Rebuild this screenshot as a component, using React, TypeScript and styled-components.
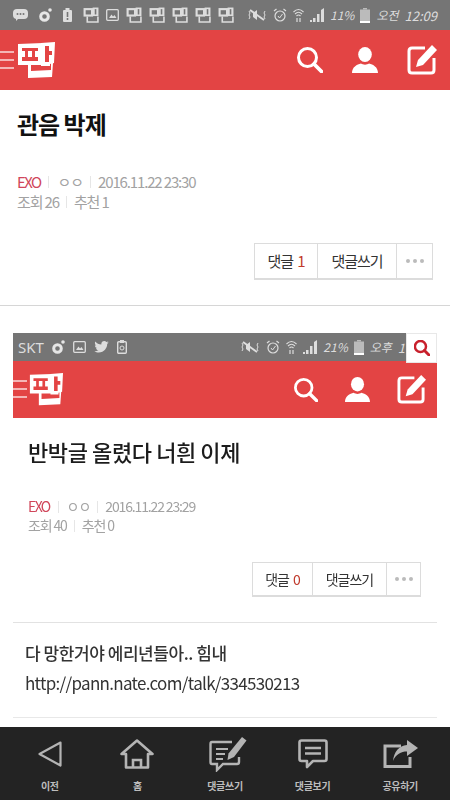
import React from "react";
import styled, { createGlobalStyle } from "styled-components";

const GlobalStyle = createGlobalStyle`
  html, body {
    margin: 0;
    padding: 0;
    background: #fff;
  }
  * {
    box-sizing: border-box;
  }
`;

const FONT = `"Noto Sans CJK KR", "Noto Sans", sans-serif`;

const Page = styled.div`
  display: flex;
  flex-direction: column;
  width: 450px;
  height: 800px;
  overflow: hidden;
  background: #fff;
  font-family: ${FONT};
`;

const StatusBar = styled.div<{ $inner?: boolean }>`
  position: relative;
  display: flex;
  align-items: center;
  justify-content: space-between;
  flex: none;
  height: ${(p) => (p.$inner ? "28px" : "30px")};
  padding: ${(p) => (p.$inner ? "0 32px 0 5px" : "0 13px")};
  background: #757575;
  color: #ddd;
`;

const StatusGroup = styled.div<{ $gap?: number }>`
  display: flex;
  align-items: center;
  gap: ${(p) => p.$gap ?? 8}px;
`;

const StatusText = styled.span<{ $size?: number }>`
  font-size: ${(p) => p.$size ?? 12}px;
  line-height: 1;
  font-style: italic;
  color: #ddd;
  white-space: nowrap;
`;

const CarrierText = styled.span`
  font-family: "Noto Sans", sans-serif;
  font-size: 15px;
  line-height: 1;
  color: #ddd;
`;

const SearchBadge = styled.div`
  position: absolute;
  top: 0;
  right: 0;
  display: flex;
  align-items: center;
  justify-content: center;
  width: 31px;
  height: 30px;
  background: #fff;
  border: 1px solid #e8e8e8;
  z-index: 1;
`;

const Header = styled.header<{ $inner?: boolean }>`
  display: flex;
  align-items: center;
  flex: none;
  height: ${(p) => (p.$inner ? "57px" : "60px")};
  padding-right: ${(p) => (p.$inner ? "11px" : "13px")};
  background: #e34444;
`;

const Burger = styled.div`
  display: flex;
  flex-direction: column;
  gap: 6px;
  width: 14px;
  margin-top: -1px;

  span {
    display: block;
    height: 2px;
    background: #f4b5b5;
  }
`;

const LogoSlot = styled.div<{ $inner?: boolean }>`
  display: flex;
  margin-left: ${(p) => (p.$inner ? "2px" : "3px")};
  margin-right: auto;
`;

const HeaderIcons = styled.div<{ $inner?: boolean }>`
  display: flex;
  align-items: center;
  gap: ${(p) => (p.$inner ? "27px" : "29px")};
`;

const Content = styled.main`
  flex: 1;
  min-height: 0;
  overflow: hidden;
`;

const Post = styled.section`
  display: flex;
  flex-direction: column;
  padding: 17px 17px 25px;
  border-bottom: 1px solid #d6d6d6;
`;

const Title = styled.h1`
  margin: 0;
  font-size: 24px;
  line-height: 34px;
  font-weight: 700;
  letter-spacing: -1px;
  color: #111;
`;

const MetaBlock = styled.div<{ $top: number; $line: number; $size: number }>`
  margin-top: ${(p) => p.$top}px;
  font-size: ${(p) => p.$size}px;
  line-height: ${(p) => p.$line}px;
  letter-spacing: -1.15px;
  color: #a2a2a2;
`;

const MetaRow = styled.div`
  display: flex;
  align-items: center;
  white-space: nowrap;
`;

const Board = styled.span`
  letter-spacing: -1.6px;
  color: #d0465a;
`;

const Anon = styled.span`
  letter-spacing: -1px;
`;

const MetaSep = styled.i<{ $gap: number }>`
  display: block;
  width: 1px;
  height: 12px;
  margin: 0 ${(p) => p.$gap}px;
  background: #e6e6e6;
`;

const Actions = styled.div<{ $top: number; $height: number; $inset?: number }>`
  display: flex;
  align-self: flex-end;
  height: ${(p) => p.$height}px;
  margin-top: ${(p) => p.$top}px;
  margin-right: ${(p) => p.$inset ?? 0}px;
  border: 1px solid #dcdcdc;
  border-bottom-width: 2px;
  background: #fff;
`;

const ActionCell = styled.div<{ $width: number; $size: number }>`
  display: flex;
  align-items: center;
  justify-content: center;
  gap: 4px;
  width: ${(p) => p.$width}px;
  padding-bottom: 1px;
  font-size: ${(p) => p.$size}px;
  letter-spacing: -1px;
  color: #333;
  border-left: 1px solid #dcdcdc;

  &:first-child {
    border-left: none;
  }
`;

const Count = styled.span`
  color: #c0392b;
`;

const Dots = styled.div`
  display: flex;
  gap: 3px;

  span {
    width: 4px;
    height: 4px;
    border-radius: 50%;
    background: #bbb;
  }
`;

const Shot = styled.div`
  margin: 27px 13px 0;
  filter: blur(0.4px);
`;

const ShotBody = styled.div`
  display: flex;
  flex-direction: column;
  padding: 17px 0 25px 15px;
  border-bottom: 1px solid #e2e2e2;
`;

const ShotTitle = styled.h2`
  margin: 0;
  font-size: 22px;
  line-height: 32px;
  font-weight: 500;
  letter-spacing: -0.4px;
  color: #1c1c1c;
`;

const Body = styled.div`
  padding: 15px 12px 19px;
  border-bottom: 1px solid #e8e8e8;
  font-size: 17px;
  line-height: 30px;
  color: #333;
`;

const BodyLine = styled.div`
  letter-spacing: -0.7px;
  white-space: nowrap;
`;

const BodyLead = styled.div`
  font-weight: 500;
  letter-spacing: -0.45px;
  white-space: nowrap;
`;

const BottomNav = styled.nav`
  display: grid;
  grid-template-columns: repeat(5, 1fr);
  flex: none;
  height: 73px;
  padding: 0 6px;
  background: #232323;
`;

const NavItem = styled.div`
  display: flex;
  flex-direction: column;
  align-items: center;
`;

const NavIcon = styled.div`
  display: flex;
  align-items: center;
  justify-content: center;
  height: 44px;
  margin-top: 5px;
`;

const NavLabel = styled.span`
  margin-top: 3px;
  font-size: 10px;
  line-height: 14px;
  font-weight: 700;
  letter-spacing: -0.3px;
  color: #bdbdbd;
  white-space: nowrap;
`;

/* red header logo, white blocks with the red strokes cut over them */
const Logo = ({ width = 38 }: { width?: number }) => (
  <svg width={width} height={(width * 36) / 38} viewBox="0 0 38 36">
    <path d="M1 2 L26 1 L26 23 L1 23 Z" fill="#fff" />
    <path d="M24 1 L38 0 L37 21 L33 22 L33 24 L24 24 Z" fill="#fff" />
    <path d="M11 20 L14 20 L14 29 L34 28 L34 21 L36 21 L35 35 L11 36 Z" fill="#fff" />
    <path d="M5 6 H21 V9 H18 V15 H21 V19 H5 V15 H8 V9 H5 Z M11 9 V15 H15 V9 Z" fill="#e34444" fillRule="evenodd" />
    <path d="M28 4 H32 V9 H35 V13 H32 V20 H28 Z" fill="#e34444" />
  </svg>
);

const MiniLogo = () => (
  <svg width="16" height="16" viewBox="0 0 15 15">
    <rect x="0.5" y="1" width="9" height="8" fill="#ddd" />
    <rect x="9" y="0.5" width="5.5" height="8" fill="#ddd" />
    <path d="M4 9 V14 H14 V9" fill="none" stroke="#ddd" strokeWidth="1.5" />
    <rect x="2.5" y="3" width="5" height="4" fill="#757575" />
    <rect x="11" y="2" width="1.5" height="5" fill="#757575" />
  </svg>
);

const ChatIcon = () => (
  <svg width="15" height="12" viewBox="0 0 15 12">
    <rect x="0" y="0" width="15" height="10" rx="4" fill="#ddd" />
    <path d="M3 9 L3 12 L6 9 Z" fill="#ddd" />
    <circle cx="4.5" cy="5" r="1" fill="#757575" />
    <circle cx="7.5" cy="5" r="1" fill="#757575" />
    <circle cx="10.5" cy="5" r="1" fill="#757575" />
  </svg>
);

const RingIcon = () => (
  <svg width="13" height="14" viewBox="0 0 13 14">
    <circle cx="5.5" cy="8.5" r="3.8" fill="none" stroke="#e6e6e6" strokeWidth="3" />
    <circle cx="11" cy="2" r="1.8" fill="#e6e6e6" />
  </svg>
);

const NoticeIcon = () => (
  <svg width="9" height="14" viewBox="0 0 9 14">
    <rect x="2.5" y="0" width="4" height="2" fill="#ddd" />
    <rect x="0" y="2" width="9" height="12" rx="1" fill="#ddd" />
    <rect x="3.7" y="4" width="1.6" height="5" fill="#757575" />
    <rect x="3.7" y="10" width="1.6" height="2" fill="#757575" />
  </svg>
);

const ImageIcon = () => (
  <svg width="13" height="12" viewBox="0 0 13 12">
    <rect x="0.7" y="0.7" width="11.6" height="10.6" rx="1" fill="none" stroke="#ddd" strokeWidth="1.3" />
    <path d="M3 9 L5.5 5.5 L7 7.5 L8.5 6 L10.5 9 Z" fill="#ddd" />
  </svg>
);

const TwitterIcon = () => (
  <svg width="15" height="12" viewBox="0 0 24 20">
    <path
      d="M24 2.4c-.9.4-1.8.7-2.8.8 1-.6 1.8-1.6 2.2-2.7-1 .6-2 1-3.1 1.2C19.3.7 18 0 16.6 0c-2.7 0-4.900 2.200-4.900 4.900 0 .4 0 .8.100 1.100C7.700 5.800 4.100 3.900 1.700.900c-.4.700-.7 1.600-.7 2.500 0 1.700.9 3.200 2.200 4.100-.8 0-1.600-.2-2.200-.6v.1c0 2.400 1.700 4.400 3.900 4.800-.4.100-.8.200-1.300.2-.3 0-.6 0-.9-.1.6 2 2.400 3.400 4.600 3.400C5 16.100 2.800 17 .6 17c-.2 0-.4 0-.6 0C2.200 18.300 4.800 19.200 7.500 19.200c9 0 14-7.500 14-14v-.6c1-.7 1.800-1.500 2.500-2.200z"
      fill="#ddd"
    />
  </svg>
);

const ClipIcon = () => (
  <svg width="10" height="14" viewBox="0 0 10 14">
    <rect x="0.7" y="1.7" width="8.6" height="11.6" rx="1" fill="none" stroke="#ddd" strokeWidth="1.4" />
    <rect x="3" y="0" width="4" height="3" fill="#ddd" />
    <circle cx="5" cy="8" r="2" fill="none" stroke="#ddd" />
  </svg>
);

const MuteIcon = () => (
  <svg width="20" height="14" viewBox="0 0 20 14">
    <path d="M6 5 L10 2 L10 12 L6 9 Z" fill="#ddd" />
    <path d="M3 2 L17 12" stroke="#ddd" strokeWidth="2" />
    <path d="M2 3 Q4 5 2 7 Q4 9 2 11 M18 3 Q16 5 18 7 Q16 9 18 11" fill="none" stroke="#ddd" />
  </svg>
);

const AlarmIcon = () => (
  <svg width="14" height="15" viewBox="0 0 14 15">
    <circle cx="7" cy="8" r="5" fill="none" stroke="#ddd" strokeWidth="1.2" />
    <path d="M5 8 L6.5 10 L9.5 6" fill="none" stroke="#ddd" />
    <path d="M1 3 L3.5 1 M13 3 L10.5 1" stroke="#ddd" strokeWidth="1.2" />
  </svg>
);

const WifiIcon = () => (
  <svg width="11" height="15" viewBox="0 0 11 15">
    <path d="M0.5 4 Q5.5 -1 10.5 4 M2 6 Q5.5 2.5 9 6 M3.5 8 Q5.5 6 7.5 8" fill="none" stroke="#ddd" strokeWidth="1.1" />
    <path d="M4 10 V14 M7 10 V14" stroke="#ddd" strokeWidth="1.2" />
  </svg>
);

const SignalIcon = () => (
  <svg width="14" height="14" viewBox="0 0 14 14">
    <rect x="0" y="12" width="2" height="2" fill="#ddd" />
    <rect x="3" y="10" width="2.5" height="4" fill="#ddd" />
    <rect x="7" y="6" width="2.5" height="8" fill="#ddd" />
    <path d="M11 2 L14 0 V14 H11 Z" fill="#ddd" />
  </svg>
);

const BatteryIcon = () => (
  <svg width="10" height="15" viewBox="0 0 10 15">
    <rect x="3" y="0" width="4" height="1.5" fill="#bbb" />
    <rect x="0" y="1.5" width="10" height="13.5" fill="#bbb" />
    <rect x="0" y="13" width="10" height="2" fill="#fff" />
  </svg>
);

const SearchIcon = ({ size = 26, color = "#fff", weight = 3 }: { size?: number; color?: string; weight?: number }) => (
  <svg width={size} height={size} viewBox="0 0 26 26">
    <circle cx="10.5" cy="10.5" r="9" fill="none" stroke={color} strokeWidth={weight} />
    <path d="M17 17 L24.5 24.5" stroke={color} strokeWidth={weight + 0.8} strokeLinecap="round" />
  </svg>
);

const UserIcon = ({ size = 26 }: { size?: number }) => (
  <svg width={size} height={size} viewBox="0 0 26 26">
    <ellipse cx="13" cy="7.5" rx="6.8" ry="7.5" fill="#fff" />
    <path d="M0 26 C0 20 5 17.5 9 16.5 C11 18 15 18 17 16.5 C21 17.5 26 20 26 26 Z" fill="#fff" />
  </svg>
);

const EditIcon = ({ size = 30 }: { size?: number }) => (
  <svg width={size} height={size} viewBox="0 0 30 30">
    <path d="M18 3 H5 Q2 3 2 6 V25 Q2 28 5 28 H24 Q27 28 27 25 V13" fill="none" stroke="#fff" strokeWidth="3" />
    <path d="M25 0 L30 5 L16 20 L9 22 L11 15 Z" fill="#fff" />
  </svg>
);

const NAV_STROKE = "#b4b4b4";

const BackIcon = () => (
  <svg width="24" height="26" viewBox="0 0 24 26">
    <path d="M22.5 1.5 L1.5 13 L22.5 24.5 Z" fill="none" stroke={NAV_STROKE} strokeWidth="2.2" strokeLinejoin="round" />
  </svg>
);

const HomeIcon = () => (
  <svg width="34" height="30" viewBox="0 0 34 30">
    <path d="M1.5 15 L17 1.5 L32.5 15 H28 V28.5 H6 V15 Z" fill="none" stroke={NAV_STROKE} strokeWidth="2.6" strokeLinejoin="round" />
    <path d="M13 28 V21 H21 V28" fill="none" stroke={NAV_STROKE} strokeWidth="2.6" />
  </svg>
);

const WriteIcon = () => (
  <svg width="44" height="36" viewBox="-6 0 44 36">
    <path d="M23 6 H3 Q1.5 6 1.5 8 V26 Q1.5 28 3 28 H8 V34 L14 28 H28 Q30 28 30 26 V21" fill="none" stroke={NAV_STROKE} strokeWidth="2.4" />
    <path d="M7 13 H19 M7 18 H16 M7 23 H14" stroke={NAV_STROKE} strokeWidth="2.2" />
    <path d="M33 1 L37.5 4.5 L25 21 L18.5 24 L19.5 17.5 Z" fill={NAV_STROKE} />
  </svg>
);

const CommentIcon = () => (
  <svg width="30" height="30" viewBox="0 0 30 30">
    <path d="M3.5 1.5 H26.5 Q28.5 1.5 28.5 3.5 V20 Q28.5 22 26.5 22 H15 L9 28 V22 H3.5 Q1.5 22 1.5 20 V3.5 Q1.5 1.5 3.5 1.5 Z" fill="none" stroke={NAV_STROKE} strokeWidth="2.6" strokeLinejoin="round" />
    <path d="M7 9 H23 M7 14.5 H23" stroke={NAV_STROKE} strokeWidth="2.4" />
  </svg>
);

const ShareIcon = () => (
  <svg width="35" height="28" viewBox="0 0 35 28">
    <path d="M18 6 H2 V26.5 H27 V17" fill="none" stroke={NAV_STROKE} strokeWidth="3" />
    <path d="M24 0 L35 8 L24 16 V11.5 C18 11.5 13 14 10 21 C11 12 16 5.5 24 5 Z" fill={NAV_STROKE} />
  </svg>
);

const navItems = [
  { label: "이전", icon: <BackIcon /> },
  { label: "홈", icon: <HomeIcon /> },
  { label: "댓글쓰기", icon: <WriteIcon /> },
  { label: "댓글보기", icon: <CommentIcon /> },
  { label: "공유하기", icon: <ShareIcon /> },
];

const App = () => {
  return (
    <>
      <GlobalStyle />
      <Page>
        <StatusBar>
          <StatusGroup $gap={11}>
            <ChatIcon />
            <RingIcon />
            <NoticeIcon />
            <StatusGroup $gap={7}>
              <MiniLogo />
              <ImageIcon />
              <MiniLogo />
              <MiniLogo />
              <MiniLogo />
              <MiniLogo />
              <MiniLogo />
            </StatusGroup>
          </StatusGroup>
          <StatusGroup $gap={6}>
            <MuteIcon />
            <AlarmIcon />
            <WifiIcon />
            <SignalIcon />
            <StatusText>11%</StatusText>
            <BatteryIcon />
            <StatusText>오전</StatusText>
            <StatusText $size={13}>12:09</StatusText>
          </StatusGroup>
        </StatusBar>
        <Header>
          <Burger>
            <span />
            <span />
            <span />
          </Burger>
          <LogoSlot>
            <Logo />
          </LogoSlot>
          <HeaderIcons>
            <SearchIcon />
            <UserIcon />
            <EditIcon />
          </HeaderIcons>
        </Header>

        <Content>
          <Post>
            <Title>관음 박제</Title>
            <MetaBlock $top={31} $line={20} $size={15}>
              <MetaRow>
                <Board>EXO</Board>
                <MetaSep $gap={8} />
                <Anon>ㅇㅇ</Anon>
                <MetaSep $gap={7} />
                2016.11.22 23:30
              </MetaRow>
              <MetaRow>
                조회 26
                <MetaSep $gap={7} />
                추천 1
              </MetaRow>
            </MetaBlock>
            <Actions $top={31} $height={37}>
              <ActionCell $width={62} $size={15}>
                <span>댓글</span>
                <Count>1</Count>
              </ActionCell>
              <ActionCell $width={79} $size={15}>
                댓글쓰기
              </ActionCell>
              <ActionCell $width={36} $size={15}>
                <Dots>
                  <span />
                  <span />
                  <span />
                </Dots>
              </ActionCell>
            </Actions>
          </Post>

          <Shot>
            <StatusBar $inner>
              <StatusGroup $gap={8}>
                <CarrierText>SKT</CarrierText>
                <RingIcon />
                <ImageIcon />
                <TwitterIcon />
                <ClipIcon />
              </StatusGroup>
              <StatusGroup $gap={6}>
                <MuteIcon />
                <AlarmIcon />
                <WifiIcon />
                <SignalIcon />
                <StatusText>21%</StatusText>
                <BatteryIcon />
                <StatusText>오후</StatusText>
                <StatusText $size={13}>1</StatusText>
              </StatusGroup>
              <SearchBadge>
                <SearchIcon size={16} color="#c8202c" weight={4} />
              </SearchBadge>
            </StatusBar>
            <Header $inner>
              <Burger>
                <span />
                <span />
                <span />
              </Burger>
              <LogoSlot $inner>
                <Logo width={34} />
              </LogoSlot>
              <HeaderIcons $inner>
                <SearchIcon size={24} />
                <UserIcon size={25} />
                <EditIcon size={29} />
              </HeaderIcons>
            </Header>
            <ShotBody>
              <ShotTitle>반박글 올렸다 너흰 이제</ShotTitle>
              <MetaBlock $top={30} $line={19} $size={14}>
                <MetaRow>
                  <Board>EXO</Board>
                  <MetaSep $gap={8} />
                  <Anon>ㅇㅇ</Anon>
                  <MetaSep $gap={7} />
                  2016.11.22 23:29
                </MetaRow>
                <MetaRow>
                  조회 40
                  <MetaSep $gap={7} />
                  추천 0
                </MetaRow>
              </MetaBlock>
              <Actions $top={27} $height={35} $inset={16}>
                <ActionCell $width={59} $size={14}>
                  <span>댓글</span>
                  <Count>0</Count>
                </ActionCell>
                <ActionCell $width={74} $size={14}>
                  댓글쓰기
                </ActionCell>
                <ActionCell $width={34} $size={14}>
                  <Dots>
                    <span />
                    <span />
                    <span />
                  </Dots>
                </ActionCell>
              </Actions>
            </ShotBody>
            <Body>
              <BodyLead>다 망한거야 에리년들아.. 힘내</BodyLead>
              <BodyLine>http://pann.nate.com/talk/334530213</BodyLine>
            </Body>
          </Shot>
        </Content>

        <BottomNav>
          {navItems.map((item) => (
            <NavItem key={item.label}>
              <NavIcon>{item.icon}</NavIcon>
              <NavLabel>{item.label}</NavLabel>
            </NavItem>
          ))}
        </BottomNav>
      </Page>
    </>
  );
};

export default App;
